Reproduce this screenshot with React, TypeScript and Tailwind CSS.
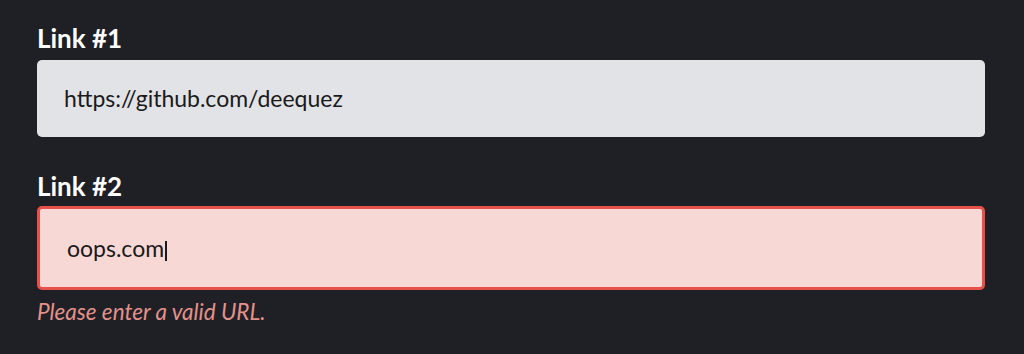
export default function App() {
  return (
    <div className="min-h-screen bg-[#1f2025] px-[37px] pt-[22px] font-['Lato',sans-serif]">
      <div className="flex w-[948px] flex-col">
        {/* Link #1 */}
        <label className="text-[26px] font-bold leading-[32px] text-white">Link #1</label>
        <div className="mt-[6px] flex h-[77px] items-center rounded-[5px] bg-[#e2e3e7] px-[27px] text-[23px] text-[#1a1a1a]">
          https://github.com/deequez
        </div>

        {/* Link #2 */}
        <label className="mt-[33px] text-[26px] font-bold leading-[32px] text-white">Link #2</label>
        <div className="mt-[4px] flex h-[84px] items-center rounded-[5px] border-[3px] border-[#e8514a] bg-[#f8d8d5] px-[27px] text-[23px] text-[#1a1a1a]">
          oops.com<span className="ml-[1px] mt-[5px] inline-block h-[20px] w-[2px] bg-[#1a1a1a]" />
        </div>
        <p className="mt-[8px] text-[22.5px] italic leading-[28px] text-[#e3928b]">Please enter a valid URL.</p>
      </div>
    </div>
  );
}
